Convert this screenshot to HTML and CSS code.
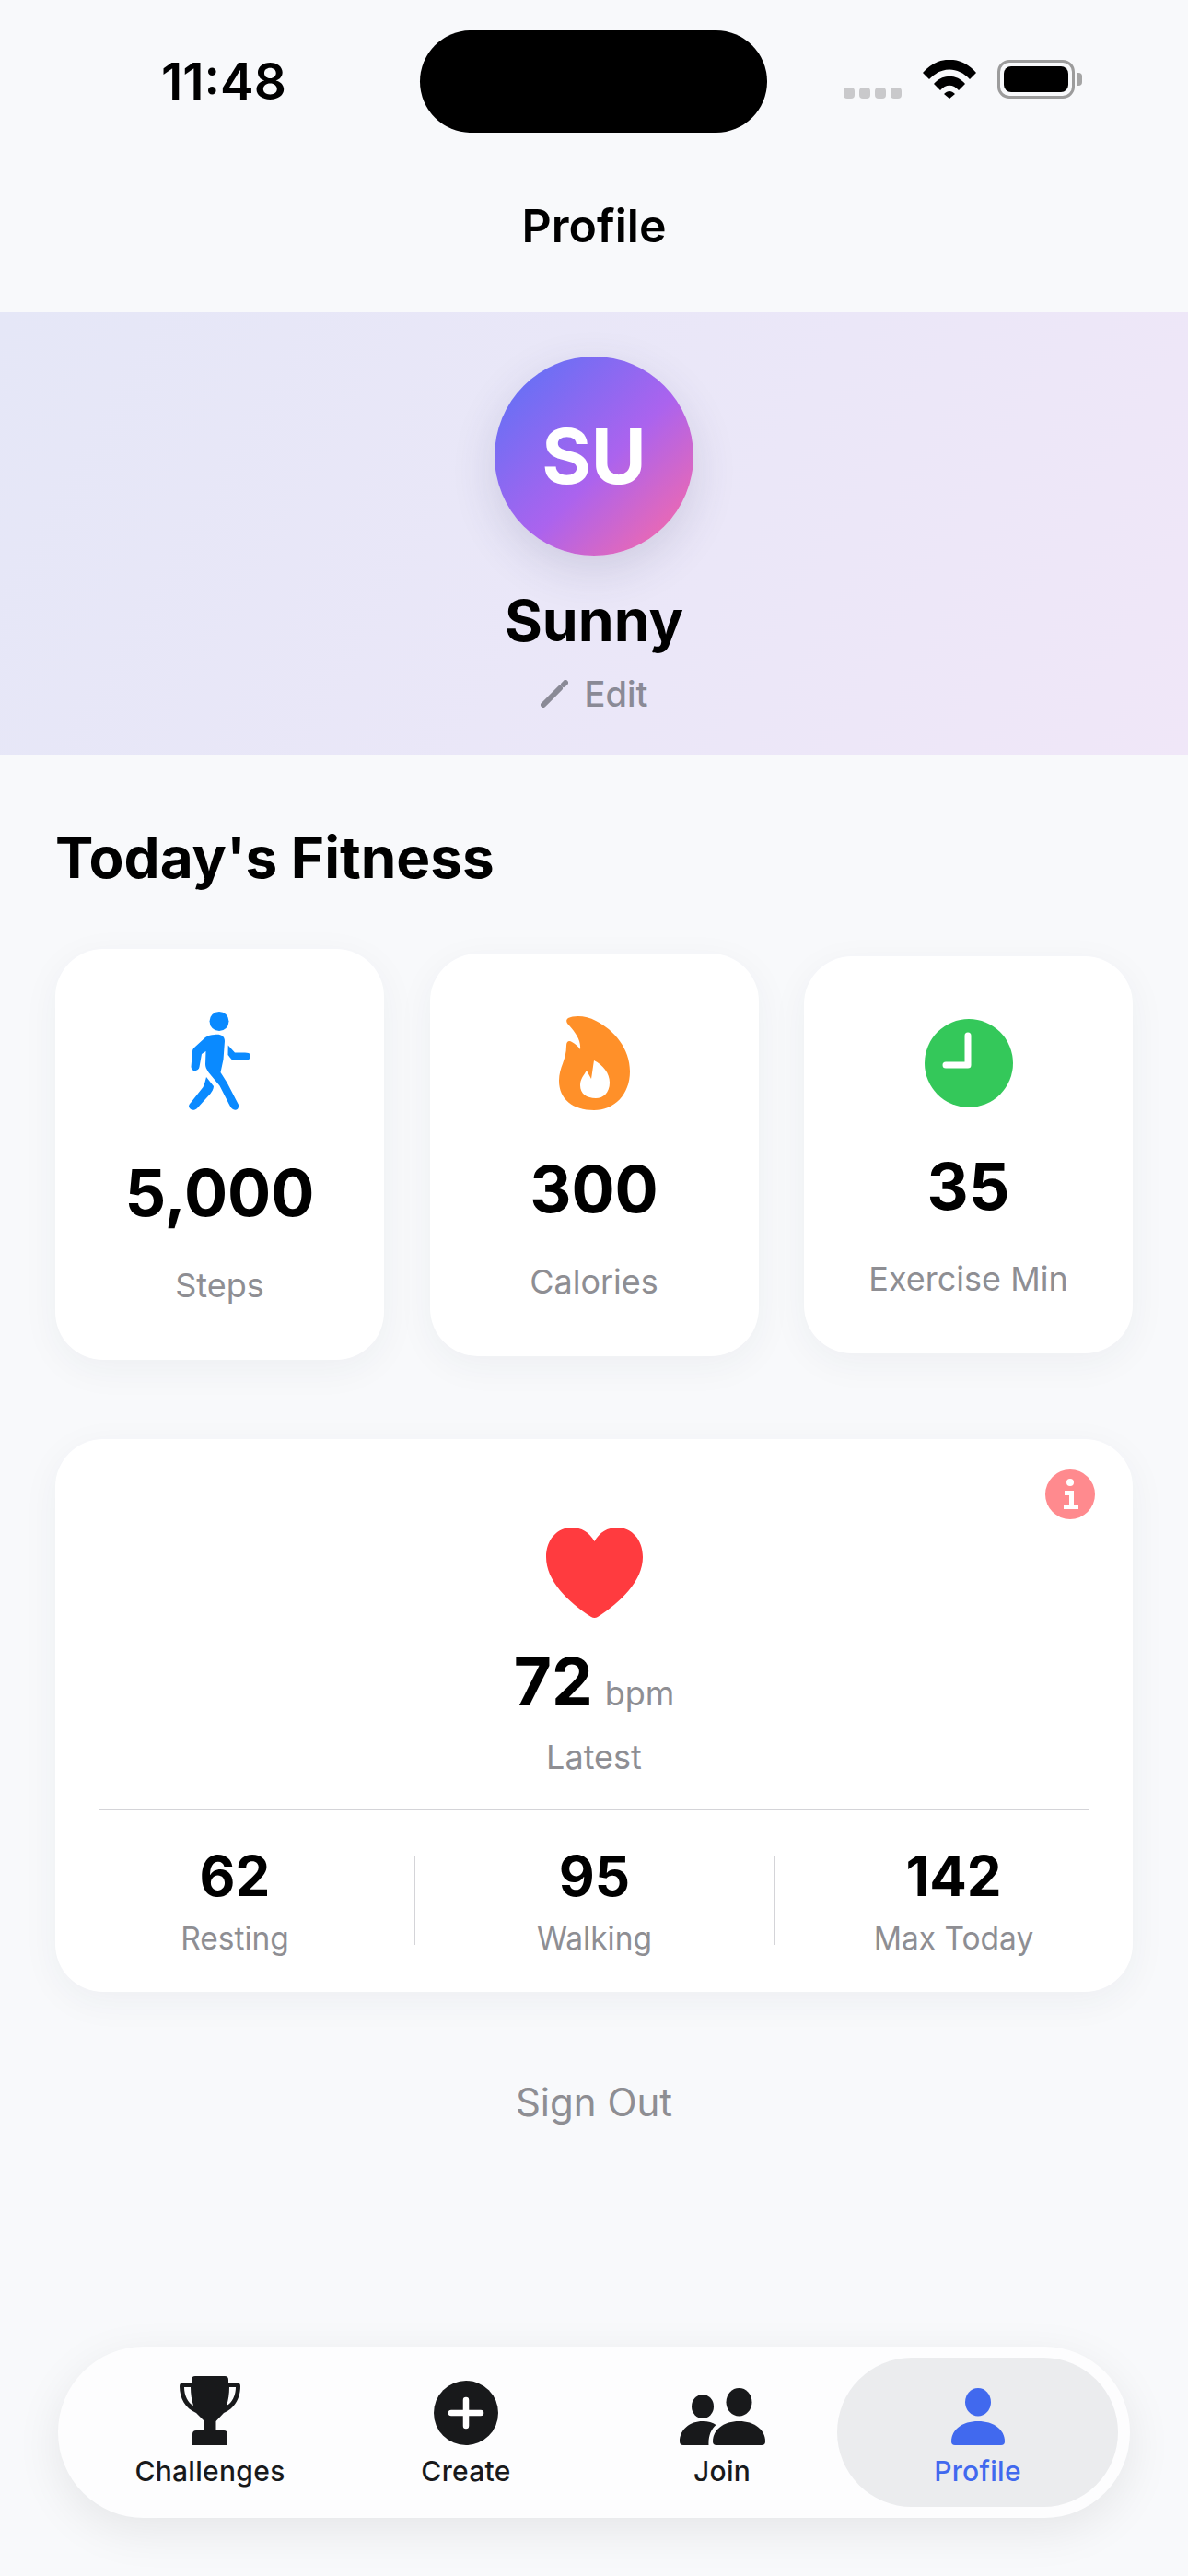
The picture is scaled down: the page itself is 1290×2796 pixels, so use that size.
FILE: index.html
```html
<!DOCTYPE html>
<html lang="en">
<head>
    <meta charset="UTF-8">
    <meta name="viewport" content="width=device-width, initial-scale=1.0">
    <title>Profile</title>
    <link rel="stylesheet" href="styles.css">
</head>
<body>
    <div class="status-bar">
        <div class="time">11:48</div>
        <div class="island"></div>
        <div class="status-icons">
            <div class="signal"><span></span><span></span><span></span><span></span></div>
            <svg class="wifi" viewBox="0 0 58 42"><path d="M0 14C16-5 42-5 58 14L51 21C38 7 20 7 7 21Z"/><path d="M12 26C21 15 37 15 46 26L39 33C33 26 25 26 19 33Z"/><path d="M23 37C27 33 31 33 35 37L29 42Z"/></svg>
            <div class="battery"><div class="battery-fill"></div></div>
            <div class="battery-cap"></div>
        </div>
    </div>
    <div class="page-title">Profile</div>

    <div class="hero">
        <div class="avatar">SU</div>
        <div class="name">Sunny</div>
        <div class="edit">
            <svg class="pen" viewBox="0 0 30 30"><path d="M3 27L21 9" /><path d="M25 5L27 3"/></svg>
            <span>Edit</span>
        </div>
    </div>

    <div class="content">
        <h2 class="section-title">Today's Fitness</h2>
        <div class="stats">
            <div class="stat-card">
                <svg class="icon-walk" viewBox="0 0 67 107" fill="#0a8aff">
                    <ellipse cx="33" cy="10.5" rx="10.5" ry="10.5"/>
                    <path d="M28 25C34 24 39 26 39 32L37.500 52L34.500 66L41.500 77L54 101C55 106 51 108 48 106C46 105 45 103 43.500 100L33.500 80.500L21.500 66C19 62 18 60 18 57L18.500 43L14 46L11.500 60C11 65 3 66 2.500 60L4 43C4 41 5 40 6 39L18 28C21 26 24 25 28 25Z"/>
                    <path d="M19 71L27 81C27 84 25 87 23.500 89L9 105C6 108 1 107 0 103C0 101 1 100 2 99L15.500 82C17 79 18 75 19 71Z"/>
                    <path d="M42.700 36.500L50 44.500H61C65 44.500 68 46 67 49C66 52 64 53 61 53H49C47 53 45 50 42.500 47Z"/>
                </svg>
                <div class="stat-value">5,000</div>
                <div class="stat-label">Steps</div>
            </div>
            <div class="stat-card">
                <svg class="icon-flame" viewBox="0 0 77 102">
                    <path fill="#ff9029" d="M10 2C16-1 30-1 40 5C60 15 77 35 77 60C77 85 60 102 38 102C15 102 0 90 0 70C0 55 8 48 8 32C8 27 11 26 14 28C18 30 21 33 23 36C24 26 18 18 11 10C8 7 7 4 10 2Z"/>
                    <path fill="#fff" d="M30 59L35 68C36 62 37 54 38 48C48 53 55 62 55 72C55 83 48 89 40 89C30 89 23 84 23 75C23 68 27 64 30 59Z"/>
                </svg>
                <div class="stat-value">300</div>
                <div class="stat-label">Calories</div>
            </div>
            <div class="stat-card">
                <svg class="icon-clock" viewBox="0 0 96 96">
                    <circle cx="48" cy="48" r="48" fill="#34c85a"/>
                    <path d="M47 18V50H23" fill="none" stroke="#fff" stroke-width="7" stroke-linecap="round" stroke-linejoin="round"/>
                </svg>
                <div class="stat-value">35</div>
                <div class="stat-label">Exercise Min</div>
            </div>
        </div>

        <div class="heart-card">
            <svg class="info" viewBox="0 0 54 54">
                <circle cx="27" cy="27" r="27" fill="#ff8a8e"/>
                <circle cx="27" cy="14" r="4" fill="#fff"/>
                <path d="M21 23H31V38H36V43H20V38H26V28H21Z" fill="#fff"/>
            </svg>
            <svg class="heart" viewBox="0 0 105 98">
                <path fill="#ff3b3f" d="M52.500 15C47 5 38 0 28 0C12 0 0 13 0 32C0 58 24 81 49 97C51 98.300 54 98.300 56 97C81 81 105 58 105 32C105 13 93 0 77 0C67 0 58 5 52.500 15Z"/>
            </svg>
            <div class="bpm-row"><span class="bpm-value">72</span><span class="bpm-unit">bpm</span></div>
            <div class="bpm-label">Latest</div>
            <div class="heart-line"></div>
            <div class="heart-stats">
                <div class="heart-stat"><div class="heart-value">62</div><div class="heart-label">Resting</div></div>
                <div class="heart-stat"><div class="heart-value">95</div><div class="heart-label">Walking</div></div>
                <div class="heart-stat"><div class="heart-value">142</div><div class="heart-label">Max Today</div></div>
            </div>
        </div>

        <div class="sign-out">Sign Out</div>
    </div>

    <div class="tab-bar">
        <div class="tab">
            <svg class="icon-trophy" viewBox="0 0 66 75">
                <path fill="#18191b" d="M13 4Q13 0 17 0H49Q53 0 53 4V7H62Q66 7 66 11C66 24 60 35 48 40L39.500 49V59H48Q52 59 52 63V75H14V63Q14 59 18 59H27V49L18 40C6 35 0 24 0 11Q0 7 4 7H13Z"/>
                <path fill="#fdfdfe" d="M5 12H12C12 19 13 26 15 32C9 29 5 21 5 12ZM61 12H54C54 19 53 26 51 32C57 29 61 21 61 12Z"/>
            </svg>
            <span>Challenges</span>
        </div>
        <div class="tab">
            <svg class="icon-plus" viewBox="0 0 70 70">
                <circle cx="35" cy="35" r="35" fill="#18191b"/>
                <path d="M35 21V49M19 35H51" stroke="#fff" stroke-width="6.500" stroke-linecap="round"/>
            </svg>
            <span>Create</span>
        </div>
        <div class="tab">
            <svg class="icon-people" viewBox="0 0 93 62" fill="#18191b">
                <ellipse cx="25" cy="20" rx="12" ry="13"/>
                <ellipse cx="64.500" cy="15.300" rx="14" ry="15.300"/>
                <path d="M0 58C0 45 11 36 25 36C31 36 36 37.500 39.500 40C34 45 31 52 31.500 62H4Q0 62 0 58Z"/>
                <path d="M36 58C36 45 48 36 64.500 36C81 36 93 45 93 58Q93 62 89 62H40Q36 62 36 58Z"/>
            </svg>
            <span>Join</span>
        </div>
        <div class="tab active">
            <svg class="icon-person" viewBox="0 0 58 62" fill="#4169ee">
                <ellipse cx="29" cy="15.300" rx="14" ry="15.300"/>
                <path d="M0 58C0 45 12 36 29 36C46 36 58 45 58 58Q58 62 54 62H4Q0 62 0 58Z"/>
            </svg>
            <span>Profile</span>
        </div>
    </div>
</body>
</html>
```
FILE: styles.css
```css
body {
    font-family: Inter, "Liberation Sans", sans-serif;
    background-color: #f8f9fb;
    margin: 0;
    padding: 0;
    color: #000;
    width: 1290px;
    height: 2796px;
    overflow: hidden;
}
.status-bar {
    display: grid;
    grid-template-columns: 456px 377px 1fr;
    padding-top: 33px;
    height: 111px;
}
.time {
    padding-left: 175px;
    padding-top: 25px;
    font-size: 55px;
    line-height: 60px;
    font-weight: 600;
}
.island {
    background-color: #000;
    border-radius: 56px;
    height: 111px;
}
.status-icons {
    display: flex;
    align-items: center;
    align-self: start;
    padding-left: 83px;
    padding-top: 32px;
    height: 42px;
}
.signal {
    display: flex;
    gap: 5px;
    align-self: flex-end;
}
.signal span {
    width: 12px;
    height: 12px;
    border-radius: 4px;
    background-color: #c9c9cb;
}
.wifi {
    width: 58px;
    height: 42px;
    margin-left: 23px;
}
.battery {
    width: 84px;
    height: 42px;
    box-sizing: border-box;
    border: 3px solid #9c9c9c;
    border-radius: 13px;
    padding: 4px;
    margin-left: 23px;
}
.battery-fill {
    height: 100%;
    background-color: #000;
    border-radius: 8px;
}
.battery-cap {
    width: 5px;
    height: 14px;
    margin-left: 3px;
    background-color: #a5a5a5;
    border-radius: 0 4px 4px 0;
}
.page-title {
    height: 195px;
    padding-top: 71px;
    box-sizing: border-box;
    text-align: center;
    font-size: 50px;
    line-height: 60px;
    font-weight: 600;
}
.hero {
    height: 480px;
    box-sizing: border-box;
    padding-top: 48px;
    display: flex;
    flex-direction: column;
    align-items: center;
    background: linear-gradient(120deg, #e5e7f7 0%, #ebe7f8 60%, #f0e7f8 100%);
}
.avatar {
    width: 216px;
    height: 216px;
    border-radius: 50%;
    background: linear-gradient(135deg, #6670f5 10%, #ab63ee 55%, #ee69b0 90%);
    box-shadow: 0 16px 48px rgba(60, 60, 110, 0.16);
    color: #fff;
    font-size: 82px;
    font-weight: 700;
    display: flex;
    align-items: center;
    justify-content: center;
}
.name {
    font-size: 62.500px;
    font-weight: 700;
    line-height: 80px;
    margin-top: 30px;
}
.edit {
    display: flex;
    align-items: center;
    gap: 18px;
    margin-top: 17px;
    color: #8a8a96;
    font-size: 38px;
    line-height: 46px;
    font-weight: 500;
}
.pen {
    width: 30px;
    height: 30px;
    fill: none;
    stroke: #8a8a96;
    stroke-width: 6;
    stroke-linecap: round;
}
.content {
    padding: 0 60px;
}
.section-title {
    margin: 72px 0 0 0;
    font-size: 62px;
    line-height: 80px;
    font-weight: 700;
}
.stats {
    display: flex;
    justify-content: space-between;
    align-items: center;
    margin-top: 59px;
    height: 446px;
}
.stat-card {
    width: 357px;
    box-sizing: border-box;
    padding: 68px 0 59px;
    background-color: #fff;
    border-radius: 52px;
    box-shadow: 0 10px 40px rgba(40, 50, 70, 0.05);
    display: flex;
    flex-direction: column;
    align-items: center;
}
.icon-walk {
    width: 67px;
    height: 107px;
}
.icon-flame {
    width: 77px;
    height: 102px;
    margin-bottom: -4px;
}
.icon-clock {
    width: 96px;
    height: 96px;
    margin-bottom: -4px;
}
.stat-value {
    font-size: 70px;
    line-height: 88px;
    font-weight: 700;
    margin-top: 46px;
}
.stat-label {
    font-size: 36px;
    line-height: 44px;
    color: #8e8e93;
    margin-top: 34px;
}
.heart-card {
    position: relative;
    margin-top: 86px;
    height: 600px;
    box-sizing: border-box;
    padding-top: 96px;
    background-color: #fff;
    border-radius: 52px;
    box-shadow: 0 10px 40px rgba(40, 50, 70, 0.05);
    display: flex;
    flex-direction: column;
    align-items: center;
}
.info {
    position: absolute;
    top: 33px;
    right: 41px;
    width: 54px;
    height: 54px;
}
.heart {
    width: 105px;
    height: 98px;
}
.bpm-row {
    display: flex;
    align-items: baseline;
    gap: 13px;
    margin-top: 25px;
}
.bpm-value {
    font-size: 71px;
    line-height: 88px;
    font-weight: 700;
}
.bpm-unit {
    font-size: 36px;
    color: #8e8e93;
}
.bpm-label {
    font-size: 36px;
    line-height: 44px;
    color: #8e8e93;
    margin-top: 16px;
}
.heart-line {
    align-self: stretch;
    margin: 35px 48px 0;
    height: 1px;
    background-color: #d4d4d8;
}
.heart-stats {
    align-self: stretch;
    display: grid;
    grid-template-columns: 1fr 1fr 1fr;
    margin-top: 50px;
}
.heart-stat {
    height: 96px;
    text-align: center;
    border-left: 1px solid #d4d4d8;
}
.heart-stat:first-child {
    border-left: none;
}
.heart-value {
    font-size: 60px;
    line-height: 50px;
    font-weight: 700;
    margin-top: -4px;
}
.heart-label {
    font-size: 33.500px;
    line-height: 42px;
    color: #8e8e93;
    margin-top: 22px;
}
.sign-out {
    margin-top: 92px;
    text-align: center;
    font-size: 42px;
    line-height: 56px;
    color: #8e8e93;
}
.tab-bar {
    position: absolute;
    left: 63px;
    top: 2547px;
    width: 1164px;
    height: 186px;
    box-sizing: border-box;
    padding: 12px 26px;
    background-color: #fdfdfe;
    border-radius: 93px;
    box-shadow: 0 14px 50px rgba(0, 0, 0, 0.08);
    display: grid;
    grid-template-columns: repeat(4, 278px);
}
.tab {
    display: flex;
    flex-direction: column;
    align-items: center;
    justify-content: flex-end;
    padding-bottom: 20px;
    font-size: 30px;
    font-weight: 450;
    line-height: 38px;
    letter-spacing: 0.3px;
    color: #18191b;
    gap: 9px;
}
.tab.active {
    color: #4169ee;
    background-color: #ebecee;
    border-radius: 81px;
    margin: 0 -13px 0 -14px;
}
.icon-trophy {
    width: 66px;
    height: 75px;
}
.icon-plus {
    width: 70px;
    height: 70px;
}
.icon-people {
    width: 93px;
    height: 62px;
}
.icon-person {
    width: 58px;
    height: 62px;
}
```
